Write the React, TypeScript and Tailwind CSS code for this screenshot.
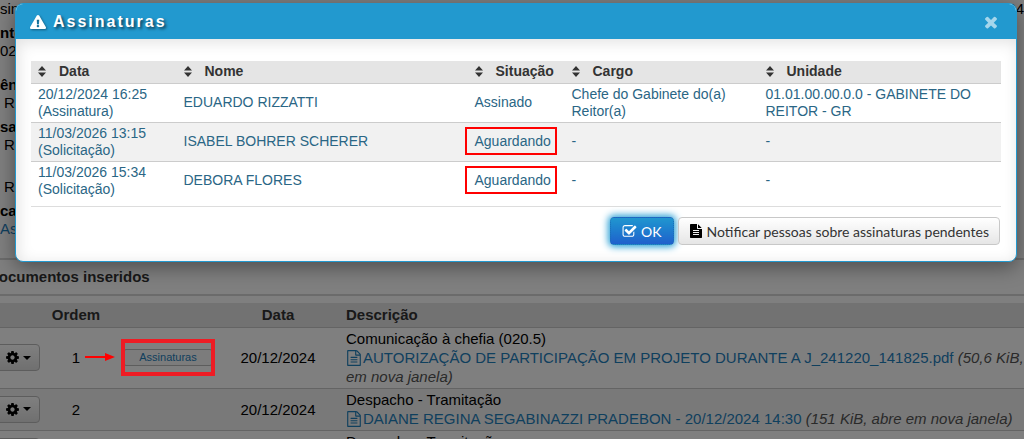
import { FaExclamationTriangle } from "react-icons/fa";

const icons = {
  check:
    "M1472 930v318q0 119-84.5 203.5t-203.5 84.5h-832q-119 0-203.5-84.5t-84.5-203.5v-832q0-119 84.5-203.5t203.5-84.5h832q63 0 117 25 15 7 18 23 3 17-9 29l-49 49q-10 10-23 10-3 0-9-2-23-6-45-6h-832q-66 0-113 47t-47 113v832q0 66 47 113t113 47h832q66 0 113-47t47-113v-254q0-13 9-22l64-64q10-10 23-10 6 0 12 3 20 8 20 29zm231-489l-814 814q-24 24-57 24t-57-24l-430-430q-24-24-24-57t24-57l110-110q24-24 57-24t57 24l263 263 647-647q24-24 57-24t57 24l110 110q24 24 24 57t-24 57z",
  file: "M1596 476q14 14 28 36h-472v-472q22 14 36 28zm-476 164h544v1056q0 40-28 68t-68 28h-1344q-40 0-68-28t-28-68v-1600q0-40 28-68t68-28h800v544q0 40 28 68t68 28zm160 736v-64q0-14-9-23t-23-9h-704q-14 0-23 9t-9 23v64q0 14 9 23t23 9h704q14 0 23-9t9-23zm0-256v-64q0-14-9-23t-23-9h-704q-14 0-23 9t-9 23v64q0 14 9 23t23 9h704q14 0 23-9t9-23zm0-256v-64q0-14-9-23t-23-9h-704q-14 0-23 9t-9 23v64q0 14 9 23t23 9h704q14 0 23-9t9-23z",
  fileOutline:
    "M1596 380q28 28 48 76t20 88v1152q0 40-28 68t-68 28h-1344q-40 0-68-28t-28-68v-1600q0-40 28-68t68-28h896q40 0 88 20t76 48zm-444-244v376h376q-10-29-22-41l-313-313q-12-12-41-22zm384 1528v-1024h-416q-40 0-68-28t-28-68v-416h-768v1536h1280zm-1024-864q0-14 9-23t23-9h704q14 0 23 9t9 23v64q0 14-9 23t-23 9h-704q-14 0-23-9t-9-23v-64zm736 224q14 0 23 9t9 23v64q0 14-9 23t-23 9h-704q-14 0-23-9t-9-23v-64q0-14 9-23t23-9h704zm0 256q14 0 23 9t9 23v64q0 14-9 23t-23 9h-704q-14 0-23-9t-9-23v-64q0-14 9-23t23-9h704z",
  cog: "M1152 896q0-106-75-181t-181-75-181 75-75 181 75 181 181 75 181-75 75-181zm512-109v222q0 12-8 23t-20 13l-185 28q-19 54-39 91 35 50 107 138 10 12 10 25t-9 23q-27 37-99 108t-94 71q-12 0-26-9l-138-108q-44 23-91 38-16 136-29 186-7 28-36 28h-222q-14 0-24.5-8.5t-11.5-21.5l-28-184q-49-16-90-37l-141 107q-10 9-25 9-14 0-25-11-126-114-165-168-7-10-7-23 0-12 8-23 15-21 51-66.5t54-70.5q-27-50-41-99l-183-27q-13-2-21-12.5t-8-23.5v-222q0-12 8-23t19-13l186-28q14-46 39-92-40-57-107-138-10-12-10-24 0-10 9-23 26-36 98.5-107.5t94.5-71.5q13 0 26 10l138 107q44-23 91-38 16-136 29-186 7-28 36-28h222q14 0 24.5 8.5t11.5 21.5l28 184q49 16 90 37l142-107q9-9 24-9 13 0 25 10 129 119 165 170 7 8 7 22 0 12-8 23-15 21-51 66.5t-54 70.5q26 50 41 98l183 28q13 2 21 12.5t8 23.5z",
  times:
    "M1490 1322q0 40-28 68l-136 136q-28 28-68 28t-68-28l-294-294-294 294q-28 28-68 28t-68-28l-136-136q-28-28-28-68t28-68l294-294-294-294q-28-28-28-68t28-68l136-136q28-28 68-28t68 28l294 294 294-294q28-28 68-28t68 28l136 136q28 28 28 68t-28 68l-294 294 294 294q28 28 28 68z",
};

const Icon = ({ name, className }: { name: keyof typeof icons; className?: string }) => (
  <svg viewBox="0 0 1792 1792" fill="currentColor" className={className} aria-hidden="true">
    <path d={icons[name]} />
  </svg>
);

const signatures = [
  {
    date: "20/12/2024 16:25",
    kind: "(Assinatura)",
    name: "EDUARDO RIZZATTI",
    status: "Assinado",
    role: "Chefe do Gabinete do(a) Reitor(a)",
    unit: "01.01.00.00.0.0 - GABINETE DO REITOR - GR",
  },
  {
    date: "11/03/2026 13:15",
    kind: "(Solicitação)",
    name: "ISABEL BOHRER SCHERER",
    status: "Aguardando",
    role: "-",
    unit: "-",
  },
  {
    date: "11/03/2026 15:34",
    kind: "(Solicitação)",
    name: "DEBORA FLORES",
    status: "Aguardando",
    role: "-",
    unit: "-",
  },
];

const columns = [
  { label: "Data", width: "w-[15%]" },
  { label: "Nome", width: "w-[30%]" },
  { label: "Situação", width: "w-[10%]" },
  { label: "Cargo", width: "w-[20%]" },
  { label: "Unidade", width: "w-[25%]" },
];

const documents = [
  {
    order: 1,
    signed: true,
    title: "Comunicação à chefia (020.5)",
    file: "AUTORIZAÇÃO DE PARTICIPAÇÃO EM PROJETO DURANTE A J_241220_141825.pdf",
    info: "(50,6 KiB, abre em nova janela)",
  },
  {
    order: 2,
    signed: false,
    title: "Despacho - Tramitação",
    file: "DAIANE REGINA SEGABINAZZI PRADEBON - 20/12/2024 14:30",
    info: "(151 KiB, abre em nova janela)",
  },
  {
    order: 3,
    signed: false,
    title: "Despacho - Tramitação",
    file: "DAIANE REGINA SEGABINAZZI PRADEBON - 20/12/2024 14:31",
    info: "(151 KiB, abre em nova janela)",
  },
];

const ProcessSummary = () => (
  <div className="flex h-[260px] justify-between border-b-2 border-[#d6d6d6] leading-[18px]">
    <dl>
      <dd className="mb-[6px]">sinatura</dd>
      <dt className="font-bold">nte</dt>
      <dd className="mb-4">025</dd>
      <dt className="font-bold">ência</dt>
      <dd className="mb-[6px] pl-1">R</dd>
      <dt className="font-bold">sado</dt>
      <dd className="mb-6 pl-1">R</dd>
      <dd className="mb-[6px] pl-1">R</dd>
      <dt className="font-bold">cação</dt>
      <dd>
        <a href="#assinaturas" className="text-[#1f80bc]">Assinatura</a>
      </dd>
    </dl>
    <p>20/12/2024 14:24</p>
  </div>
);

const DocumentList = () => (
  <section>
    <h2 className="-ml-3 border-b-2 border-[#d6d6d6] py-[7px] text-[15px] leading-5 font-bold text-[#333]">
      Documentos inseridos
    </h2>
    <div className="-mr-12 mt-[7px]">
      <table className="w-full table-fixed text-left leading-[19px]">
        <thead className="bg-[#e4e4e4] text-[#333]">
          <tr className="h-6 border-b border-[#c8c8c8]">
            <th className="w-12" aria-label="Ações" />
            <th className="w-14 text-center">Ordem</th>
            <th className="w-32" aria-label="Assinaturas" />
            <th className="w-[92px] text-center">Data</th>
            <th className="pl-[22px]">Descrição</th>
          </tr>
        </thead>
        <tbody>
          {documents.map((doc) => (
            <tr key={doc.order} className="border-b border-[#c8c8c8] even:bg-[#f2f2f2]">
              <td>
                <button
                  type="button"
                  aria-label="Opções do documento"
                  className="-ml-1 flex h-[27px] w-11 items-center justify-center gap-[3px] rounded border border-[#bbb] bg-linear-to-b from-white to-[#e0e0e0] text-black"
                >
                  <Icon name="cog" className="size-[15px]" />
                  <span className="border-x-4 border-t-4 border-x-transparent border-t-black" />
                </button>
              </td>
              <td className="text-center">{doc.order}</td>
              <td>
                {doc.signed && (
                  <div className="relative ml-5 w-[88px]">
                    <button
                      type="button"
                      className="block h-[17px] w-full rounded-xs border border-[#bbb] bg-[#f8f8f8] text-[11px] leading-[15px] text-[#1f80bc]"
                    >
                      Assinaturas
                    </button>
                    <span className="absolute -inset-x-[3px] -inset-y-[10px] z-10 border-4 border-[#ee1c24]" />
                    <svg viewBox="0 0 30 8" className="absolute top-1 right-[97px] z-10 h-2 w-[30px]" aria-hidden="true">
                      <path d="M0 4h21" stroke="#ff0000" strokeWidth="2" />
                      <path d="M20 0l10 4-10 4z" fill="#ff0000" />
                    </svg>
                  </div>
                )}
              </td>
              <td className="text-center">20/12/2024</td>
              <td className="pt-px pb-[2px] pl-[22px]">
                <div>{doc.title}</div>
                <a href="#documento" className="text-[#1f80bc]">
                  <Icon name="fileOutline" className="mr-px inline size-4 align-[-3px]" />
                  {doc.file}
                </a>{" "}
                <i className="text-[#555]">{doc.info}</i>
              </td>
            </tr>
          ))}
        </tbody>
      </table>
    </div>
  </section>
);

const SignaturesDialog = () => (
  <div
    role="dialog"
    aria-labelledby="dialog-title"
    className="absolute top-[3px] right-[7px] left-[15px] z-20 overflow-hidden rounded-lg border border-[#2299cf] bg-white shadow-[0_5px_20px_rgba(0,0,0,0.4)]"
  >
    <header className="flex h-[35px] items-center justify-between bg-[#2299cf] pr-4 pl-[14px] text-white">
      <h1
        id="dialog-title"
        className="flex items-center gap-[7px] text-[16px] font-bold tracking-[2px] [text-shadow:2px_2px_3px_rgba(0,0,0,0.6)]"
      >
        <FaExclamationTriangle className="size-4 drop-shadow-[1px_1px_1px_rgba(0,0,0,0.4)]" />
        Assinaturas
      </h1>
      <button type="button" aria-label="Fechar" className="text-[#a5d6ec]">
        <Icon name="times" className="size-[18px]" />
      </button>
    </header>

    <div className="px-[15px] pt-[22px] pb-4 shadow-[inset_2px_3px_15px_rgba(0,0,0,0.12)]">
      <table className="w-full table-fixed text-left text-[14px] leading-[17px] text-[#2a6685]">
        <thead className="bg-[#e5e5e5] text-[#333]">
          <tr className="h-[22px] border-b border-[#ccc]">
            {columns.map((col) => (
              <th key={col.label} className={col.width}>
                <span className="flex items-center gap-[13px] pl-[7px]">
                  <svg viewBox="0 0 8 11" className="h-[11px] w-2 shrink-0" fill="currentColor" aria-hidden="true">
                    <path d="M4 0l4 4.5H0zM4 11L0 6.5h8z" />
                  </svg>
                  {col.label}
                </span>
              </th>
            ))}
          </tr>
        </thead>
        <tbody>
          {signatures.map((item) => (
            <tr key={item.date} className="h-[39px] border-b border-[#ccc] last:border-0 even:bg-[#f1f1f1]">
              <td className="pl-[7px]">
                {item.date}
                <br />
                {item.kind}
              </td>
              <td className="pl-[7px]">{item.name}</td>
              <td className="pl-[7px]">
                <span className="relative">
                  {item.status}
                  {item.status === "Aguardando" && (
                    <span className="absolute -inset-y-[6px] -right-[6px] -left-[10px] border-2 border-[#ff0000]" />
                  )}
                </span>
              </td>
              <td className="pr-8 pl-[7px]">{item.role}</td>
              <td className="pr-7 pl-[7px]">{item.unit}</td>
            </tr>
          ))}
        </tbody>
      </table>

      <footer className="mt-[6px] flex justify-end gap-1 border-t border-[#ddd] pt-[10px] pr-px font-[Lato,sans-serif] text-[14px]">
        <button
          type="button"
          className="flex h-7 items-center gap-1 rounded border border-dotted border-[#1b6fb5] bg-linear-to-b from-[#2196cf] to-[#2060cc] px-[11px] text-white shadow-[0_0_7px_2px_#2aa0d5]"
        >
          <Icon name="check" className="size-[15px]" />
          OK
        </button>
        <button
          type="button"
          className="flex h-7 items-center gap-1 rounded border border-[#c8c8c8] bg-linear-to-b from-white to-[#e6e6e6] px-[10px] text-[#333]"
        >
          <Icon name="file" className="size-[14px] text-black" />
          Notificar pessoas sobre assinaturas pendentes
        </button>
      </footer>
    </div>
  </div>
);

const App = () => {
  return (
    <main className="relative h-screen overflow-hidden bg-white font-['Liberation_Sans',Arial,sans-serif] text-[15px] text-black">
      <ProcessSummary />
      <DocumentList />
      <div className="absolute inset-0 bg-black/50" />
      <SignaturesDialog />
    </main>
  );
};

export default App;
